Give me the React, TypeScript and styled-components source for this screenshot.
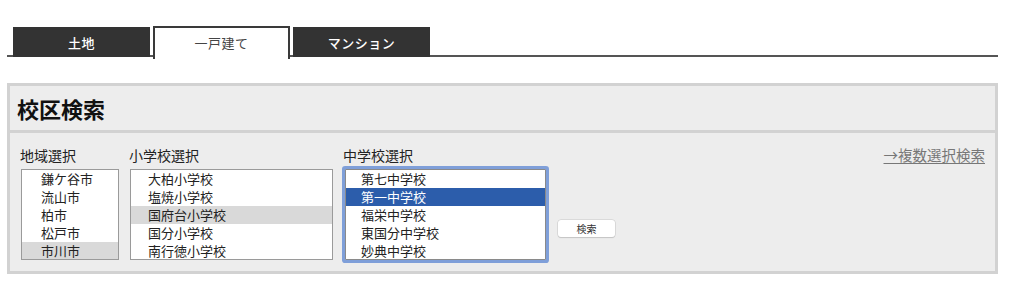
import React from 'react'
import styled, { createGlobalStyle } from 'styled-components'

const GlobalStyle = createGlobalStyle`
    body {
        margin: 0;
        background: #fff;
        font-family: "Noto Sans CJK JP", "Noto Sans", sans-serif;
        color: #222;
    }
`

const Page = styled.div`
    width: 1024px;
    height: 303px;
    padding-top: 26px;
    box-sizing: border-box;
`

const TabBar = styled.div`
    margin-left: 7px;
    width: 991px;
    display: flex;
    gap: 3px;
    padding-left: 6px;
    box-sizing: border-box;
    border-bottom: 2px solid #555;
    height: 31px;
`

const Tab = styled.div<{ active?: boolean }>`
    width: 137px;
    box-sizing: border-box;
    display: flex;
    align-items: center;
    justify-content: center;
    font-size: 13px;
    letter-spacing: 0.5px;
    ${p => p.active
        ? `
        background: #fff;
        color: #444;
        border: 2px solid #3a3a3a;
        border-bottom: none;
        height: 33px;
        padding-bottom: 2px;
    `
        : `
        background: #333;
        color: #fff;
        font-weight: 500;
        height: 30px;
        margin-top: 1px;
    `}
`

const Panel = styled.div`
    margin: 26px 0 0 7px;
    width: 991px;
    box-sizing: border-box;
    border: 3px solid #d2d2d2;
    background: #ededed;
`

const PanelHeader = styled.div`
    height: 44px;
    display: flex;
    align-items: center;
    padding-left: 7px;
    border-bottom: 3px solid #d2d2d2;
    font-size: 22px;
    font-weight: bold;
    color: #111;
`

const PanelBody = styled.div`
    display: flex;
    gap: 10px;
    padding: 13px 10px 11px 10px;
`

const Column = styled.div<{ width: number }>`
    width: ${p => p.width}px;
    display: flex;
    flex-direction: column;
`

const Label = styled.div`
    font-size: 14px;
    line-height: 18px;
    height: 18px;
    margin-bottom: 5px;
    color: #222;
`

const ListBox = styled.div<{ focused?: boolean; indent: number }>`
    height: 91px;
    box-sizing: border-box;
    background: #fff;
    border: 1px solid ${p => (p.focused ? '#8a8a8a' : '#9a9a9a')};
    margin-left: ${p => (p.focused ? 2 : 1)}px;
    width: ${p => (p.focused ? 'calc(100% - 4px)' : 'calc(100% - 1px)')};
    overflow: hidden;
    ${p => p.focused && `
        box-shadow: 0 0 0 3px #7f9fd9;
        border-radius: 1px;
    `}
    --indent: ${p => p.indent}px;
`

const Option = styled.div<{ selected?: 'gray' | 'blue' }>`
    height: 18px;
    line-height: 18px;
    font-size: 13px;
    padding-left: var(--indent);
    white-space: nowrap;
    background: ${p => (p.selected === 'gray' ? '#d9d9d9' : p.selected === 'blue' ? '#2c5dab' : 'transparent')};
    color: ${p => (p.selected === 'blue' ? '#fff' : '#222')};
`

const ButtonColumn = styled.div`
    padding-top: 68px;
`

const SearchButton = styled.button`
    width: 57px;
    height: 17px;
    border: none;
    border-radius: 3px;
    background: #fff;
    box-shadow: 0 0 0 0.5px #c8c8c8, 0 1px 1px rgba(0, 0, 0, 0.18);
    font-family: inherit;
    font-size: 10px;
    color: #333;
    padding: 0;
`

const MultiLink = styled.a`
    margin-left: auto;
    font-size: 14.5px;
    line-height: 18px;
    color: #777;
    text-decoration: underline;
    text-underline-offset: 2px;
    align-self: flex-start;
    white-space: nowrap;
`

const areas = ['鎌ケ谷市', '流山市', '柏市', '松戸市', '市川市']
const elementary = ['大柏小学校', '塩焼小学校', '国府台小学校', '国分小学校', '南行徳小学校']
const junior = ['第七中学校', '第一中学校', '福栄中学校', '東国分中学校', '妙典中学校']

export default function App() {
    return (
        <Page>
            <GlobalStyle />
            <TabBar>
                <Tab>土地</Tab>
                <Tab active>一戸建て</Tab>
                <Tab>マンション</Tab>
            </TabBar>

            <Panel>
                <PanelHeader>校区検索</PanelHeader>
                <PanelBody>
                    <Column width={99}>
                        <Label>地域選択</Label>
                        <ListBox indent={19}>
                            {areas.map(a => (
                                <Option key={a} selected={a === '市川市' ? 'gray' : undefined}>{a}</Option>
                            ))}
                        </ListBox>
                    </Column>
                    <Column width={204}>
                        <Label>小学校選択</Label>
                        <ListBox indent={17}>
                            {elementary.map(s => (
                                <Option key={s} selected={s === '国府台小学校' ? 'gray' : undefined}>{s}</Option>
                            ))}
                        </ListBox>
                    </Column>
                    <Column width={205}>
                        <Label>中学校選択</Label>
                        <ListBox focused indent={15}>
                            {junior.map(s => (
                                <Option key={s} selected={s === '第一中学校' ? 'blue' : undefined}>{s}</Option>
                            ))}
                        </ListBox>
                    </Column>
                    <ButtonColumn>
                        <SearchButton>検索</SearchButton>
                    </ButtonColumn>
                    <MultiLink href="#">→複数選択検索</MultiLink>
                </PanelBody>
            </Panel>
        </Page>
    )
}
